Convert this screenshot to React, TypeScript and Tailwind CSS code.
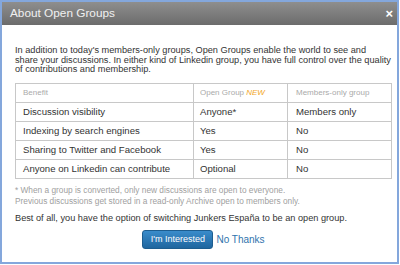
export default function App() {
  const rows = [
    ['Discussion visibility', 'Anyone*', 'Members only'],
    ['Indexing by search engines', 'Yes', 'No'],
    ['Sharing to Twitter and Facebook', 'Yes', 'No'],
    ['Anyone on Linkedin can contribute', 'Optional', 'No'],
  ]

  return (
    <div className="w-[400px] h-[265px] bg-white font-['Liberation_Sans',Arial,sans-serif]">
      <div className="w-[399px] h-[264px] border-2 border-[#84a7dc] flex flex-col">
        {/* Header */}
        <div className="h-[23px] bg-gradient-to-b from-[#8e8e8e] to-[#6c6c6c] flex items-center justify-between pl-[8px] pr-[4px]">
          <span className="text-[11.8px] text-[#f0f0f0]">About Open Groups</span>
          <span className="text-[13px] font-bold leading-none text-white">×</span>
        </div>

        {/* Body */}
        <div className="pl-[13px] pr-[2px] pt-[21px] text-[#333]">
          <p className="whitespace-nowrap text-[9.2px] leading-[9.6px]">
            In addition to today's members-only groups, Open Groups enable the world to see and
            <br />
            share your discussions. In either kind of Linkedin group, you have full control over the quality
            <br />
            of contributions and membership.
          </p>

          <table className="mt-[8px] w-[376px] border-collapse table-fixed">
            <colgroup>
              <col className="w-[178px]" />
              <col className="w-[94px]" />
              <col className="w-[104px]" />
            </colgroup>
            <thead>
              <tr className="h-[19px] text-[8px] text-[#aaa]">
                <th className="border border-[#c8c8c8] text-left font-normal pl-[7px]">Benefit</th>
                <th className="border border-[#c8c8c8] text-left font-normal pl-[6px]">
                  Open Group <span className="italic text-[#f2a72a]">NEW</span>
                </th>
                <th className="border border-[#c8c8c8] text-left font-normal pl-[8px]">Members-only group</th>
              </tr>
            </thead>
            <tbody>
              {rows.map((r) => (
                <tr key={r[0]} className="h-[19px] text-[9.6px] text-[#333]">
                  <td className="border border-[#c8c8c8] pl-[7px]">{r[0]}</td>
                  <td className="border border-[#c8c8c8] pl-[6px]">{r[1]}</td>
                  <td className="border border-[#c8c8c8] pl-[8px]">{r[2]}</td>
                </tr>
              ))}
            </tbody>
          </table>

          <p className="mt-[6px] text-[8.3px] leading-[11px] text-[#a0a0a0]">
            * When a group is converted, only new discussions are open to everyone.
            <br />
            Previous discussions get stored in a read-only Archive open to members only.
          </p>

          <p className="mt-[6px] text-[9.2px] leading-[10px] text-[#333]">
            Best of all, you have the option of switching Junkers España to be an open group.
          </p>

          <div className="mt-[7px] flex w-[377px] items-center justify-center">
            <button className="h-[19px] w-[71px] rounded-[3px] border border-[#1d5d8f] bg-gradient-to-b from-[#3a8ccb] to-[#1f669f] text-[9px] text-white">
              I'm Interested
            </button>
            <a className="ml-[3px] text-[10px] text-[#2f74ad]">No Thanks</a>
          </div>
        </div>
      </div>
    </div>
  )
}
